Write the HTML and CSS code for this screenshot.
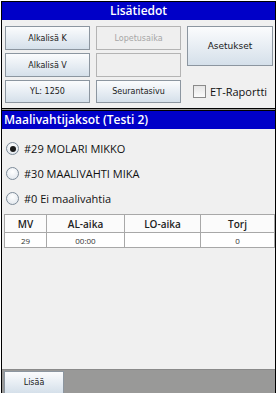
FILE: index.html
```html
<!DOCTYPE html>
<html>
<head>
<meta charset="utf-8">
<link rel="stylesheet" href="styles.css">
</head>
<body>
<div class="app">
  <section class="panel top">
    <div class="title center">Lisätiedot</div>
    <div class="grid">
      <button class="btn r1 k1">Alkalisä K</button>
      <button class="btn disabled r1 k2">Lopetusaika</button>
      <button class="btn big">Asetukset</button>
      <button class="btn r2 k1">Alkalisä V</button>
      <button class="btn disabled r2 k2"></button>
      <button class="btn r3 k1">YL: 1250</button>
      <button class="btn r3 k2">Seurantasivu</button>
      <label class="check"><span class="box"></span>ET-Raportti</label>
    </div>
  </section>
  <section class="panel bottom">
    <div class="title left">Maalivahtijaksot (Testi 2)</div>
    <div class="radios">
      <div class="radio"><span class="dot on"></span>#29 MOLARI MIKKO</div>
      <div class="radio"><span class="dot"></span>#30 MAALIVAHTI MIKA</div>
      <div class="radio"><span class="dot"></span>#0 Ei maalivahtia</div>
    </div>
    <table class="tbl">
      <thead><tr><th class="c1">MV</th><th class="c2">AL-aika</th><th class="c3">LO-aika</th><th class="c4">Torj</th></tr></thead>
      <tbody><tr><td>29</td><td>00:00</td><td></td><td>0</td></tr></tbody>
    </table>
    <div class="fill"></div>
  </section>
  <div class="footer">
    <button class="btn add">Lisää</button>
  </div>
</div>
</body>
</html>
```
FILE: styles.css
```css
html, body { margin: 0; padding: 0; background: #fff; }
body { width: 277px; height: 393px; overflow: hidden; }
.app {
  margin: 1px 1px 0 1px;
  width: 275px;
  height: 392px;
  display: flex;
  flex-direction: column;
  background: #999998;
  border-left: 1px solid #000;
  border-right: 1px solid #000;
  box-sizing: border-box;
}
.panel { background: #f0f0f0; box-sizing: border-box; }
.top { border: 1px solid #000; border-left: 0; border-right: 0; height: 108px; }
.title {
  background: #0000c8;
  color: #fff;
  font-family: "Open Sans", "DejaVu Sans", sans-serif;
  font-weight: 600;
  font-size: 12px;
  height: 18px;
  line-height: 18px;
}
.title.center { text-align: center; }
.title.left { padding-left: 2px; }
.grid {
  display: grid;
  grid-template-columns: 85px 85px 86px;
  grid-template-rows: 24px 24px 23px;
  column-gap: 6px;
  row-gap: 3px;
  padding: 6px 0 0 3px;
}
.r1 { grid-row: 1; } .r2 { grid-row: 2; } .r3 { grid-row: 3; }
.k1 { grid-column: 1; } .k2 { grid-column: 2; }
.btn {
  margin: 0;
  padding: 0;
  border: 1px solid #8c96a0;
  background: linear-gradient(#fbfcfd, #e8eef4 50%, #d5e0ea);
  font-family: "DejaVu Sans", sans-serif;
  font-size: 8px;
  color: #1a1a1a;
  box-sizing: border-box;
}
.btn.disabled {
  background: #efefef;
  border-color: #b4b4b4;
  color: #a6a6a6;
}
.btn.big {
  grid-column: 3;
  grid-row: 1 / span 2;
  height: 40px;
  font-size: 9px;
}
.check {
  grid-column: 3;
  grid-row: 3;
  display: flex;
  align-items: center;
  font-family: "Open Sans", "DejaVu Sans", sans-serif;
  font-size: 11px;
  color: #111;
  padding-left: 6px;
}
.box {
  width: 11px; height: 11px;
  border: 1px solid #8a8a8a;
  background: linear-gradient(#e6e6e6, #fbfbfb);
  margin-right: 4px;
}
.bottom {
  margin-top: 1px;
  border-top: 1px solid #000;
  border-bottom: 1px solid #8a8a8a;
  flex: 1;
  display: flex;
  flex-direction: column;
}
.radios { padding: 7px 0 0 4px; }
.radio {
  display: flex;
  align-items: center;
  height: 25px;
  font-family: "Open Sans", "DejaVu Sans", sans-serif;
  font-size: 11px;
  color: #111;
}
.dot {
  width: 11px; height: 11px;
  border-radius: 50%;
  border: 1px solid #7d8b99;
  background: radial-gradient(circle at 50% 35%, #ffffff, #dde3ea);
  margin-right: 5px;
  position: relative;
}
.dot.on::after {
  content: "";
  position: absolute;
  left: 2.5px; top: 2.5px;
  width: 6px; height: 6px;
  border-radius: 50%;
  background: #1a1a1a;
}
.tbl {
  margin: 3px 2px 0 2px;
  border-collapse: collapse;
  width: 271px;
  font-family: "Open Sans", "DejaVu Sans", sans-serif;
  background: #fff;
}
.tbl th, .tbl td { border: 1px solid #a8a8a8; text-align: center; padding: 0; }
.tbl th { font-size: 10px; font-weight: 600; height: 17px; color: #222; background: #fbfbfb; }
.tbl td { font-size: 8px; height: 14px; color: #333; }
.c1 { width: 41px; } .c2 { width: 77px; } .c3 { width: 75px; }
.fill { flex: 1; }
.footer { height: 23px; display: flex; align-items: flex-end; padding-left: 2px; }
.btn.add { width: 60px; height: 22px; border-bottom: 0; font-size: 8px; }
```
